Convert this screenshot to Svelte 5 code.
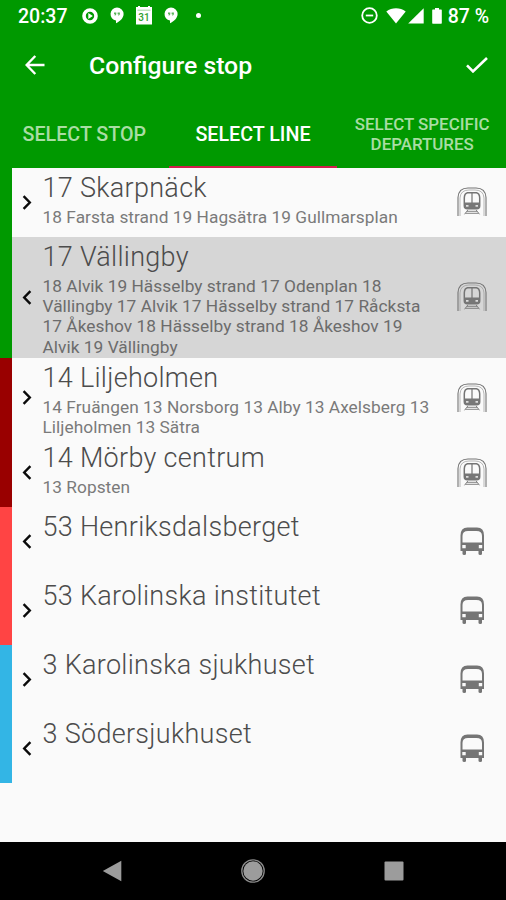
<script lang="ts">
  type Line = {
    name: string;
    via: string;
    back: boolean;
    icon: 'metro' | 'bus';
    color: string;
    selected?: boolean;
  };

  const lines: Line[] = [
    { name: '17 Skarpnäck', via: '18 Farsta strand 19 Hagsätra 19 Gullmarsplan', back: false, icon: 'metro', color: 'green' },
    { name: '17 Vällingby', via: '18 Alvik 19 Hässelby strand 17 Odenplan 18 Vällingby 17 Alvik 17 Hässelby strand 17 Råcksta 17 Åkeshov 18 Hässelby strand 18 Åkeshov 19 Alvik 19 Vällingby', back: true, icon: 'metro', color: 'green', selected: true },
    { name: '14 Liljeholmen', via: '14 Fruängen 13 Norsborg 13 Alby 13 Axelsberg 13 Liljeholmen 13 Sätra', back: false, icon: 'metro', color: 'darkred' },
    { name: '14 Mörby centrum', via: '13 Ropsten', back: true, icon: 'metro', color: 'darkred' },
    { name: '53 Henriksdalsberget', via: '', back: true, icon: 'bus', color: 'red' },
    { name: '53 Karolinska institutet', via: '', back: false, icon: 'bus', color: 'red' },
    { name: '3 Karolinska sjukhuset', via: '', back: false, icon: 'bus', color: 'blue' },
    { name: '3 Södersjukhuset', via: '', back: true, icon: 'bus', color: 'blue' }
  ];

  const tabs = ['Select stop', 'Select line', 'Select specific departures'];
  let active = $state(1);
</script>

{#snippet hangout()}
  <svg class="hangout" width="14" height="17" viewBox="0 0 14 17">
    <path d="M7 .5a6.6 6.6 0 0 0-1 13.1v2.7c4-1.7 7.6-5.3 7.6-9.2A6.6 6.6 0 0 0 7 .5z" fill="#fff" />
    <path d="M4 5.4h2.3v1.8L5.4 8.4h-.9L5 7.200H4zM7.600 5.400h2.300v1.800L9 8.400h-.9l.5-1.200h-1z" fill="#5ab55a" />
  </svg>
{/snippet}

<div class="screen">
  <header>
    <div class="status">
      <span class="clock">20:37</span>
      <svg class="play" width="16" height="16" viewBox="0 0 16 16">
        <circle cx="8" cy="8" r="6" fill="none" stroke="#fff" stroke-width="3.6" />
        <path d="M6.300 5l4.600 3-4.600 3z" fill="#fff" />
      </svg>
      {@render hangout()}
      <svg class="cal" width="18" height="19" viewBox="0 0 18 19">
        <path d="M1 1h2V0h2v1h8V0h2v1h2v17.500H1z" fill="#fff" />
        <path d="M2.500 4.200h13" stroke="#8c8" stroke-width=".8" />
        <text x="9" y="14.500" text-anchor="middle">31</text>
      </svg>
      {@render hangout()}
      <span class="dot"></span>
      <div class="system">
        <svg width="17" height="17" viewBox="0 0 17 17" fill="none" stroke="#fff" stroke-width="1.8">
          <circle cx="8.5" cy="8.5" r="7.3" />
          <path d="M4.800 8.500h7.400" />
        </svg>
        <svg class="wifi" width="20" height="16" viewBox="0 0 20 16">
          <path d="M.3 3.400C6-.9 14-.9 19.700 3.400L10 15.500z" fill="#fff" />
        </svg>
        <svg class="cell" width="16" height="16" viewBox="0 0 16 16">
          <path d="M15.700.2v15.400H.2z" fill="#fff" />
        </svg>
        <svg class="battery" width="10" height="16" viewBox="0 0 10 16">
          <path d="M3 0h4v1.600h2.200q.6 0 .6.700v12.800q0 .6-.6.600H.8q-.6 0-.6-.6V2.300q0-.7.6-.7H3z" fill="#fff" />
        </svg>
        <span class="percent">87 %</span>
      </div>
    </div>

    <div class="toolbar">
      <svg width="20" height="20" viewBox="0 0 20 20" fill="none" stroke="#fff" stroke-width="2.4">
        <path d="M19.500 10H2M10.300 1L1.600 10l8.700 9" />
      </svg>
      <h1>Configure stop</h1>
      <svg class="check" width="22" height="16" viewBox="0 0 22 16" fill="none" stroke="#fff" stroke-width="2.6">
        <path d="M1 8.400l6 6L21 1" />
      </svg>
    </div>

    <nav>
      {#each tabs as tab, i}
        <button class:active={active === i} onclick={() => (active = i)}><span>{tab}</span></button>
      {/each}
    </nav>
  </header>

  <main>
    {#each lines as line}
      <div class="row {line.color}" class:selected={line.selected}>
        <svg class="chevron" width="10" height="15" viewBox="0 0 10 15" fill="none" stroke="#0a0a0a" stroke-width="2.4">
          <path d={line.back ? 'M8.4 1.2L2.2 7.5l6.2 6.3' : 'M1.6 1.2l6.2 6.3-6.2 6.3'} />
        </svg>
        <div class="text">
          <h2>{line.name}</h2>
          <p>{line.via}</p>
        </div>
        {#if line.icon === 'metro'}
          <svg class="type" width="30" height="30" viewBox="0 0 30 30" fill="none" stroke="#747474">
            <path d="M1 29V10.500Q1.500 1 11 1h8q9.500 0 10 9.500V29" stroke-width="1.1" />
            <path d="M3 29V11Q3.500 3 12 3h6q8.500 0 9 8v18" stroke-width=".7" stroke="#999" />
            <path d="M10.500 5.800h9q3 .7 3.200 5v8q0 3-3 3h-9.400q-3 0-3-3v-8q.2-4.300 3.200-5z" stroke-width="1.5" />
            <path d="M15 6V16" stroke-width="1.2" />
            <path d="M7.500 15.500h15v4q0 2-2 2h-11q-2 0-2-2z" fill="#777" stroke="none" />
            <path d="M9 18.800h2.500M18.500 18.800H21" stroke="#ddd" stroke-width="1.7" />
            <path d="M10.800 23L7.500 27.300M19.200 23l3.300 4.300M10 24.300h10M8.500 26.300h13" stroke-width=".9" />
          </svg>
        {:else}
          <svg class="type" width="30" height="30" viewBox="0 0 30 30">
            <path fill-rule="evenodd" d="M10.500 1.500h9.500q7 0 7 8V25H3.500V9.500q0-8 7-8zM11 5Q5.500 5 5.500 10v6.500H25V10q0-5-5.500-5z" fill="#757575" />
            <path d="M5.500 24.500H9V28q0 1-1.700 1T5.500 28zM21.500 24.500H25V28q0 1-1.700 1t-1.800-1z" fill="#757575" />
            <path d="M5.300 18.900h3.400v3.400H5.300zM21.800 18.900h3.400v3.400h-3.400z" fill="#fafafa" />
          </svg>
        {/if}
      </div>
    {/each}
  </main>

  <footer>
    <svg width="20" height="22" viewBox="0 0 20 22"><path d="M19.300.8v20.400L.8 11z" fill="#9c9c9c" /></svg>
    <svg width="24" height="24" viewBox="0 0 24 24">
      <circle cx="12" cy="12" r="11.2" fill="none" stroke="#8b8b8b" stroke-width="1.3" />
      <circle cx="12" cy="12" r="9.7" fill="#9c9c9c" />
    </svg>
    <svg width="20" height="20" viewBox="0 0 20 20"><rect x=".5" y=".5" width="19" height="19" rx="1" fill="#9c9c9c" /></svg>
  </footer>
</div>

<style>
  :global(body) {
    margin: 0;
  }

  .screen {
    width: 506px;
    height: 900px;
    display: flex;
    flex-direction: column;
    background: #fafafa;
    font-family: Roboto, sans-serif;
    overflow: hidden;
  }

  svg {
    display: block;
    flex: none;
  }

  header {
    flex: none;
    height: 168px;
    background: #009900;
    color: #fff;
    display: flex;
    flex-direction: column;
  }

  .status {
    height: 31px;
    display: flex;
    align-items: center;
    padding: 0 17px 0 18px;
    font-size: 19.5px;
    font-weight: 500;
    white-space: nowrap;
  }

  .clock {
    width: 64px;
    padding-top: 1px;
  }

  .hangout { margin-left: 12px; }
  .cal { margin-left: 11px; }
  .cal + .hangout { margin-left: 11px; }

  .cal text {
    font-size: 10px;
    fill: #2f9e2f;
  }

  .dot {
    width: 5px;
    height: 5px;
    border-radius: 50%;
    background: #fff;
    margin-left: 18px;
  }

  .system {
    margin-left: auto;
    display: flex;
    align-items: center;
  }

  .wifi { margin-left: 8px; }
  .cell { margin-left: 2px; }
  .battery { margin-left: 8px; }

  .percent {
    margin-left: 6px;
    padding-top: 1px;
  }

  .toolbar {
    height: 67px;
    display: flex;
    align-items: center;
    padding: 0 18px 0 25px;
  }

  h1 {
    flex: 1;
    margin: 0 0 0 44px;
    padding-top: 2px;
    font-size: 24.8px;
    font-weight: 500;
  }

  nav {
    flex: 1;
    display: grid;
    grid-template-columns: repeat(3, 1fr);
  }

  nav button {
    border: 0;
    border-bottom: 2.5px solid transparent;
    padding: 5px 0 0;
    background: none;
    font: 500 19.7px/20px Roboto, sans-serif;
    text-transform: uppercase;
    color: #a9dda4;
  }

  nav button:last-child {
    padding: 5px 11px 0 12px;
    font-size: 16.9px;
    line-height: 19.5px;
  }

  nav .active {
    color: #fff;
    border-bottom-color: #d01d4c;
  }

  main {
    flex: 1;
  }

  .row {
    box-sizing: border-box;
    min-height: 68.9px;
    display: flex;
    align-items: center;
    border-left: 12.5px solid;
    padding: 0 19px 0 10px;
  }

  .green { border-color: #009900; }
  .darkred { border-color: #990000; }
  .red { border-color: #ff4444; }
  .blue { border-color: #33b5e5; }
  .selected { background: #d6d6d6; }

  .text {
    flex: 1;
    align-self: flex-start;
    margin: 0 18px 0 10.5px;
  }

  h2 {
    margin: 0;
    padding: 4px 0;
    font-size: 27px;
    line-height: 32px;
    font-weight: 300;
    letter-spacing: 0.3px;
    color: #4c4c4c;
  }

  p {
    margin: -1px 0 1px;
    font-size: 17.3px;
    line-height: 20.2px;
    letter-spacing: 0.04px;
    color: #7a7a7a;
  }

  .selected p { color: #6c6c6c; }

  footer {
    flex: none;
    box-sizing: border-box;
    height: 58px;
    background: #000;
    display: flex;
    align-items: center;
    justify-content: center;
    gap: 119px;
  }
</style>
